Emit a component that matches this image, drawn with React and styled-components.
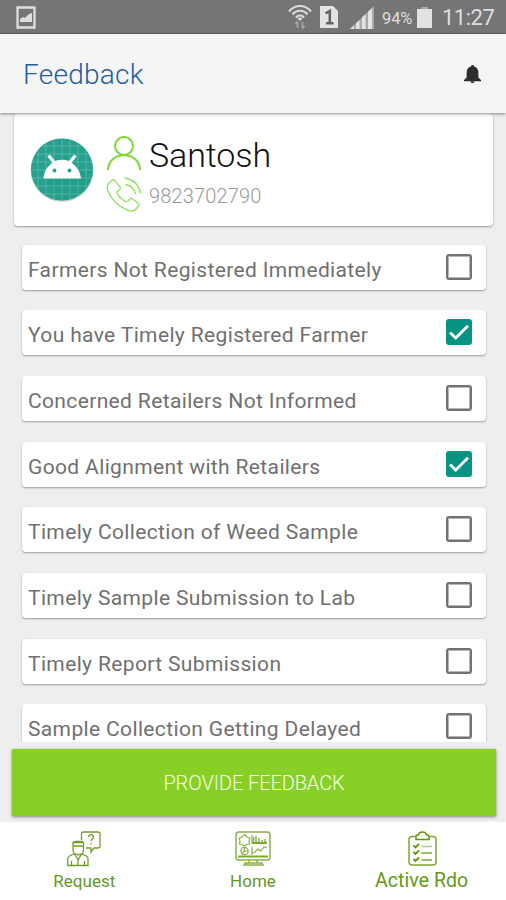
import styled, { createGlobalStyle } from "styled-components"
import { useState } from "react"

const opcoes = [
    { label: 'Farmers Not Registered Immediately' },
    { label: 'You have Timely Registered Farmer', checked: true },
    { label: 'Concerned Retailers Not Informed' },
    { label: 'Good Alignment with Retailers', checked: true },
    { label: 'Timely Collection of Weed Sample' },
    { label: 'Timely Sample Submission to Lab' },
    { label: 'Timely Report Submission' },
    { label: 'Sample Collection Getting Delayed' }
]

export default function App(){
    const [marcados, setMarcados] = useState(opcoes.map(o => !!o.checked))

    function alternar(index){
        setMarcados(marcados.map((m, i) => i === index ? !m : m))
    }

    return (
        <>
            <GlobalStyle />
            <Tela>
                <StatusBar>
                    <PictureIcon />
                    <StatusIcons>
                        <WifiIcon />
                        <SimIcon />
                        <SignalIcon />
                        <Battery>94%</Battery>
                        <BatteryIcon />
                        <Clock>11:27</Clock>
                    </StatusIcons>
                </StatusBar>
                <Header>
                    <h1>Feedback</h1>
                    <BellIcon />
                </Header>
                <Conteudo>
                    <Perfil>
                        <Avatar />
                        <Dados>
                            <Linha $height={36}>
                                <UserIcon />
                                <Nome>Santosh</Nome>
                            </Linha>
                            <Linha $height={46}>
                                <PhoneIcon />
                                <Telefone>9823702790</Telefone>
                            </Linha>
                        </Dados>
                    </Perfil>
                    <Lista>
                        {opcoes.map((o, index) => (
                            <Item key={index} onClick={() => alternar(index)}>
                                <span>{o.label}</span>
                                <Checkbox $checked={marcados[index]}>
                                    {marcados[index] && <CheckIcon />}
                                </Checkbox>
                            </Item>
                        ))}
                    </Lista>
                    <Botao>PROVIDE FEEDBACK</Botao>
                </Conteudo>
                <Nav>
                    <Aba $size={17} $spacing={0.05}>
                        <RequestIcon />
                        <span>Request</span>
                    </Aba>
                    <Aba $size={17} $spacing={0}>
                        <HomeIcon />
                        <span>Home</span>
                    </Aba>
                    <Aba $size={19.5} $spacing={0.05}>
                        <ClipboardIcon />
                        <span>Active Rdo</span>
                    </Aba>
                </Nav>
            </Tela>
        </>
    )
}

function PictureIcon(){
    return (
        <svg width="20" height="23" viewBox="0 0 20 23">
            <path d="M1.500 1.500h17v20h-17z" fill="none" stroke="#dedede" strokeWidth="2.300" />
            <path d="M4 16v-3l3-2 2 1 4-4 3-1v9z" fill="#dedede" />
        </svg>
    )
}

function WifiIcon(){
    return (
        <svg width="24" height="26" viewBox="0 0 24 26">
            <g fill="none" stroke="#dcdcdc" strokeWidth="2.1">
                <path d="M1 7.500C7 .2 17 .2 23 7.500" />
                <path d="M4.500 10.500c4-5 11-5 15 0" />
                <path d="M8 13.500c2-2.600 6-2.600 8 0" />
            </g>
            <path d="M9.500 14.500a4 4 0 0 1 5 0L12 17z" fill="#dcdcdc" />
            <path d="M9.500 18v6M7.500 20l2-2.500M14.500 18v6m2-2l-2 2.500" fill="none" stroke="#a5a5a5" strokeWidth="1.800" />
        </svg>
    )
}

function SimIcon(){
    return (
        <svg width="18" height="22" viewBox="0 0 18 22">
            <path d="M0 0h13l5 5v17H0z" fill="#e3e3e3" />
            <path d="M5.500 7.300L9.800 5v12.500M6 17.200h7.500" fill="none" stroke="#666" strokeWidth="2.600" />
        </svg>
    )
}

function SignalIcon(){
    return (
        <svg width="24" height="23" viewBox="0 0 24 23">
            <path d="M0 23L24 0v23z" fill="#a9a9a9" />
            <path d="M0 23l4-3.800V23zM6 17.300l3.500-3.400V23H6zM12 11.500l3.500-3.400V23H12zM18 5.700L22 1.900V23h-4z" fill="#e3e3e3" />
        </svg>
    )
}

function BatteryIcon(){
    return (
        <svg width="15" height="21" viewBox="0 0 15 21">
            <path d="M4.500 0h6v2H15v19H0V2h4.500z" fill="#e2e2e2" />
            <path d="M4.500 0h6v2h-6z" fill="#aaa" />
        </svg>
    )
}

function BellIcon(){
    return (
        <svg width="17" height="18" viewBox="0 0 17 18">
            <path d="M8.500 0c1 0 1.500.7 1.500 1.600 3 .8 4.400 3 4.400 6v5L17 15v1.200H0V15l2.600-2.400v-5c0-3 1.400-5.200 4.400-6C7 .7 7.500 0 8.500 0zM6.500 16.500h4c0 2-4 2-4 0z" fill="#2d2d2d" />
        </svg>
    )
}

function Avatar(){
    const linhas = [8, 16, 24, 32, 40, 48, 56]
    return (
        <svg width="64" height="64" viewBox="0 0 64 64">
            <defs>
                <clipPath id="circulo"><circle cx="32" cy="31.500" r="31" /></clipPath>
            </defs>
            <circle cx="32" cy="32.300" r="31.500" fill="#c5d5d2" />
            <g clipPath="url(#circulo)">
                <path d="M0 0h64v64H0z" fill="#25a18e" />
                {linhas.map(n => <path key={n} d={`M${n} 0v64M0 ${n}h64`} stroke="#61bdae" strokeWidth=".8" />)}
                <path d="M50 30l14 14v20H31L14 41z" fill="#138b79" opacity=".12" />
            </g>
            <path d="M13.500 40.500c.5-7 4-12.500 9-15.800l-5.200-6.300 2.600-2 5.200 6.500c4.500-1.700 9.300-1.700 13.800 0l5.200-6.500 2.600 2-5.200 6.300c5 3.300 8.800 8.800 9.500 15.800z" fill="#fff" />
            <circle cx="24.500" cy="32.500" r="1.900" fill="#25a18e" />
            <circle cx="39.500" cy="32.500" r="1.900" fill="#25a18e" />
        </svg>
    )
}

function UserIcon(){
    return (
        <svg width="36" height="36" viewBox="0 0 36 36" fill="none" stroke="#82d63c" strokeWidth="2.100">
            <circle cx="18" cy="10" r="9" />
            <path d="M1.800 34C2.500 25 9 19.200 18 19.200S33.500 25 34.200 34" />
        </svg>
    )
}

function PhoneIcon(){
    return (
        <svg width="36" height="36" viewBox="0 0 36 36" fill="none" stroke="#91df61" strokeWidth="1.300" strokeLinejoin="round" strokeLinecap="round">
            <path d="M3.500 5.500L6 3.300c1-.8 2-.6 2.800.3l5 6c.8 1 .7 2-.2 2.900l-2 1.700c-.7.6-.7 1.500-.2 2.400 1.900 3.500 4.600 6.100 8.100 7.800 1 .5 1.800.4 2.500-.3l1.800-2c.8-.9 1.900-1 2.900-.2l5.400 4.400c1.100.9 1.100 1.900.2 2.900L30 32c-2 2.400-5.300 2.500-8.700 1.100C12.400 29.300 5.300 22.400 1.900 13.800.6 10.500 1 7.600 3.500 5.500z" />
            <path d="M19 1c8.500 1.600 13.800 7 15.500 15M20 7.500c5 1.200 8 4.200 9.300 9" />
        </svg>
    )
}

function CheckIcon(){
    return (
        <svg width="20" height="16" viewBox="0 0 20 16">
            <path d="M1 8.500L6.800 14 19 1.800" fill="none" stroke="#fff" strokeWidth="2.800" />
        </svg>
    )
}

function RequestIcon(){
    return (
        <svg width="34" height="36" viewBox="0 0 34 36" fill="none" stroke="#739d29" strokeWidth="1.300">
            <path d="M14.500 9V3q0-2 2-2H31q2 0 2 2v12q0 2-2 2h-4l-3 4v-4h-5" />
            <path d="M21.500 6c0-3.300 5-3 5 0 0 2.200-2.500 2-2.500 4.500M24 12v1.500" />
            <path d="M6 11.500h10.500v7c0 7-10.500 7-10.500 0zM5.500 15h11.500M6 11.500l2-1h7l1.500 1" />
            <path d="M7.500 22.500l-5 2.500q-1.700 1-1.700 3v6.500H21V28q0-2-1.700-3l-4.800-2.500M7.500 23l3.700 6 3.300-6M11 29v5M4.500 30v4M17.500 30v4" />
        </svg>
    )
}

function HomeIcon(){
    return (
        <svg width="36" height="36" viewBox="0 0 36 36" fill="none" stroke="#8ab04b" strokeWidth="1.200">
            <rect x="1" y="1" width="34" height="28" rx="3" strokeWidth="1.500" />
            <path d="M3 25.500h30" stroke="#79ad28" strokeWidth="2" />
            <path d="M14 29v3M22 29v3M9 34h19l-1-2H10z" strokeWidth="1.500" />
            <path d="M9.500 3.500l2.300 2.300 3 1.200-.8 3 .5 3-3 .5-2 1.500-2-1.500-3-.5.500-3-.8-3 3-1.200z" />
            <circle cx="9.500" cy="20" r="3.700" />
            <path d="M9.500 16v4h4M7 23l2.500-3M17 4v8h15M17 16v8M17 22l3-1 3-3 3 2 3-4 3 1" />
            <path d="M18.500 12V6M21 12V5M24 12V7M27 12V9M30 12V8" strokeWidth="1.500" />
            <path d="M17 11h15v2H17z" fill="#79ad28" stroke="none" />
        </svg>
    )
}

function ClipboardIcon(){
    return (
        <svg width="30" height="36" viewBox="-1 0 30 36" fill="none" stroke="#7da638" strokeWidth="1.500">
            <path d="M8 5.500H4q-3 0-3 3V31q0 3 3 3h21q3 0 3-3V8.500q0-3-3-3h-4" />
            <path d="M8 8.500V5.500q0-1.500 1.500-1.500h1c.5-4 7.500-4 8 0h1q1.500 0 1.500 1.500v3z" stroke="#60950d" />
            <path d="M13.500 15.500H24" stroke="#b3cb88" />
            <path d="M13.500 22H24M13.500 29H24" />
            <path d="M5.500 14.500l2 2 3.500-3.500M5.500 21l2 2 3.500-3.500M5.500 28l2 2 3.500-3.500" stroke="#60950d" strokeWidth="1.800" />
        </svg>
    )
}

const GlobalStyle = createGlobalStyle`
    * {
        box-sizing: border-box;
    }
    body {
        margin: 0;
        font-family: Roboto, "Liberation Sans", sans-serif;
    }
    svg {
        display: block;
        flex-shrink: 0;
    }
`

const Tela = styled.div`
    width: 506px;
    height: 900px;
    display: flex;
    flex-direction: column;
    background: #eeeeee;
    overflow: hidden;
`

const StatusBar = styled.div`
    height: 34px;
    flex-shrink: 0;
    display: flex;
    align-items: center;
    justify-content: space-between;
    padding: 1px 10px 0 16px;
    background: #757575;
    border-bottom: 1px solid #636363;
`

const StatusIcons = styled.div`
    display: flex;
    align-items: center;
    color: #dedede;
    svg:nth-child(2) {
        margin-left: 8px;
    }
    svg:nth-child(3) {
        margin-left: 12px;
    }
`

const Battery = styled.span`
    width: 31px;
    margin: 2px 4px 0 8px;
    font-size: 16.5px;
    letter-spacing: -0.1px;
    white-space: nowrap;
`

const Clock = styled.span`
    width: 54px;
    margin-left: 10px;
    margin-top: 1px;
    font-size: 22px;
    letter-spacing: -0.5px;
    white-space: nowrap;
`

const Header = styled.div`
    height: 79px;
    flex-shrink: 0;
    display: flex;
    align-items: center;
    justify-content: space-between;
    padding: 1px 25px 0 23px;
    background: #f5f5f5;
    box-shadow: 0 1px 3px rgba(0, 0, 0, 0.45);
    position: relative;
    h1 {
        margin: 0;
        font-size: 28px;
        font-weight: 300;
        letter-spacing: 0.25px;
        color: #245f9e;
    }
`

const Conteudo = styled.div`
    height: 709px;
    flex-shrink: 0;
    display: flex;
    flex-direction: column;
    padding: 0 10px 0 12px;
`

const Perfil = styled.div`
    height: 113px;
    flex-shrink: 0;
    display: flex;
    margin: 0 3px 0 2px;
    padding: 25px 0 0 16px;
    background: #ffffff;
    border-radius: 4px;
    box-shadow: 0 1px 2px rgba(0, 0, 0, 0.35);
`

const Dados = styled.div`
    margin-left: 12px;
    margin-top: -2px;
`

const Linha = styled.div`
    height: ${props => props.$height}px;
    display: flex;
    align-items: center;
    gap: 7px;
`

const Nome = styled.span`
    margin-top: 2px;
    font-size: 34px;
    font-weight: 300;
    letter-spacing: -0.1px;
    color: #111111;
`

const Telefone = styled.span`
    margin-top: 2px;
    font-size: 20px;
    font-weight: 300;
    letter-spacing: 0.15px;
    color: #999999;
`

const Lista = styled.div`
    height: 516px;
    flex-shrink: 0;
    display: flex;
    flex-direction: column;
    gap: 20.67px;
    margin-bottom: 8px;
    padding: 18.6px 10px 0;
    overflow: hidden;
`

const Item = styled.div`
    height: 45px;
    flex-shrink: 0;
    display: flex;
    align-items: center;
    justify-content: space-between;
    padding: 0 14px 0 6px;
    background: #ffffff;
    border-radius: 4px;
    box-shadow: 0 1px 2px rgba(0, 0, 0, 0.35);
    span {
        margin-top: 5px;
        font-size: 21px;
        letter-spacing: 0.36px;
        color: #707070;
        white-space: nowrap;
    }
`

const Checkbox = styled.div`
    width: 26px;
    height: 26px;
    display: flex;
    align-items: center;
    justify-content: center;
    margin-bottom: 1px;
    border: 2px solid ${props => props.$checked ? '#079383' : '#737373'};
    border-radius: 3px;
    background: ${props => props.$checked ? '#079383' : '#ffffff'};
    box-shadow: inset 0 0 0 1px ${props => props.$checked ? '#079383' : '#b5b5b5'};
`

const Botao = styled.button`
    height: 67px;
    flex-shrink: 0;
    margin-top: -0.6px;
    padding: 1px 0 0;
    border: none;
    background: #88cf28;
    box-shadow: 0 1px 3px rgba(0, 0, 0, 0.45);
    color: #f4ffe5;
    font-family: inherit;
    font-size: 20px;
    font-weight: 300;
    letter-spacing: -0.1px;
`

const Nav = styled.div`
    height: 78px;
    flex-shrink: 0;
    display: grid;
    grid-template-columns: repeat(3, 1fr);
    background: #ffffff;
    position: relative;
`

const Aba = styled.div`
    display: flex;
    flex-direction: column;
    align-items: center;
    padding-top: 9px;
    span {
        margin-top: 4px;
        line-height: 20px;
        font-size: ${props => props.$size}px;
        letter-spacing: ${props => props.$spacing}px;
        color: #65991b;
    }
`
